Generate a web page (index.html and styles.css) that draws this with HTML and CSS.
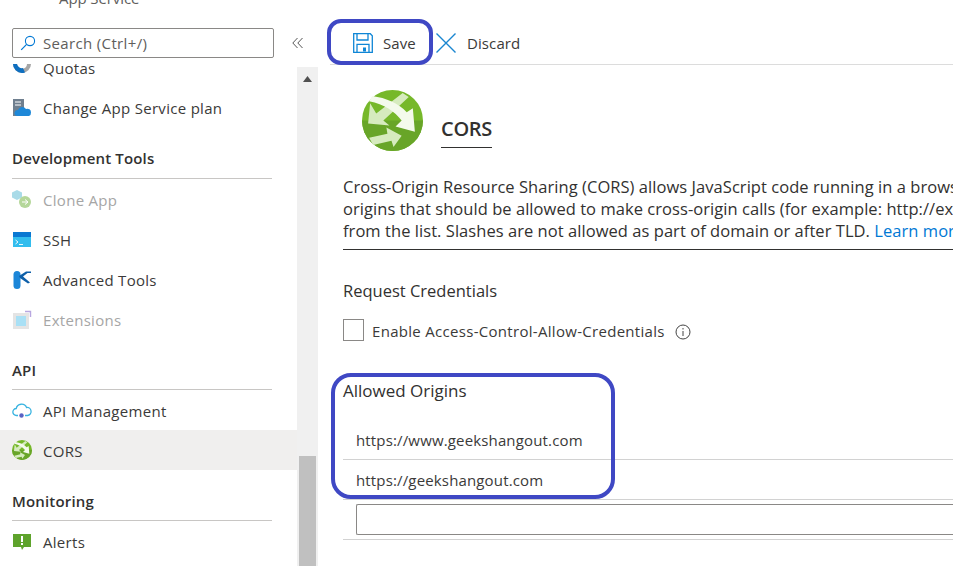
FILE: index.html
```html
<!DOCTYPE html>
<html lang="en">
<head>
<meta charset="utf-8">
<title>CORS</title>
<link rel="stylesheet" href="styles.css">
</head>
<body>
<div class="page">
  <aside class="sidebar">
    <div class="app-title">App Service</div>
    <div class="search-row">
      <div class="search">
        <svg class="search-icon" width="16" height="16" viewBox="0 0 16 16"><circle cx="10" cy="6" r="4.6" fill="none" stroke="#0078d4" stroke-width="1.1"/><path d="M6.600 9.400 1.200 14.800" stroke="#0078d4" stroke-width="1.200" fill="none"/></svg>
        <span>Search (Ctrl+/)</span>
      </div>
      <svg class="collapse" width="12" height="12" viewBox="0 0 12 12"><path d="M5.500 1 .8 6l4.700 5M10.500 1 5.800 6l4.700 5" fill="none" stroke="#555" stroke-width="1"/></svg>
    </div>
    <div class="nav-wrap">
      <nav class="nav">
        <div class="item quotas">
          <svg class="icon" width="20" height="20" viewBox="0 0 20 20"><path d="M1 6a9 9 0 0 0 18 0h-4a5 5 0 0 1-10 0z" fill="#a6a6a6"/><path d="M1 6a9 9 0 0 0 9 9c2 0 3-.5 3-.5L11 10a5 5 0 0 1-6-4z" fill="#0e6fc0"/></svg>
          <span>Quotas</span>
        </div>
        <div class="item">
          <svg class="icon" width="20" height="20" viewBox="0 0 20 20"><rect x="1" y="1" width="11" height="17" fill="#6f7f8f"/><path d="M3 4h6M3 7h6" stroke="#fff" stroke-width="1.200"/><path d="M5 18a3 3 0 0 1 1-6 4.500 4.500 0 0 1 8-1 3.600 3.600 0 0 1 5 3.500A3.500 3.500 0 0 1 17 18z" fill="#1e88d8"/></svg>
          <span>Change App Service plan</span>
        </div>
        <div class="group dev">Development Tools</div>
        <div class="item muted">
          <svg class="icon" width="20" height="20" viewBox="0 0 20 20"><path d="M5 0l5 2.500v5L5 10 0 7.500v-5z" fill="#a9dbe8"/><circle cx="13" cy="12" r="6" fill="#b5d79a"/><path d="M10 12h6M13 9.500l3 2.500-3 2.500" stroke="#fff" fill="none"/></svg>
          <span>Clone App</span>
        </div>
        <div class="item">
          <svg class="icon" width="20" height="20" viewBox="0 0 20 20"><rect x="1" y="2" width="18" height="15" fill="#32bdee"/><rect x="1" y="2" width="18" height="5" fill="#0a78d2"/><path d="M3.500 10l2.500 2-2.500 2M7 14.500h4" stroke="#fff" stroke-width=".9" fill="none"/></svg>
          <span>SSH</span>
        </div>
        <div class="item">
          <svg class="icon" width="20" height="20" viewBox="0 0 20 20"><rect x="1.500" y="1" width="7" height="18" rx="3.500" fill="#1c86d8"/><path d="M7 6 14 1.500h5L19 3h-3.500L11 6.500l7 6-2 1-8-5.500z" fill="#0e5fa8"/></svg>
          <span>Advanced Tools</span>
        </div>
        <div class="item muted">
          <svg class="icon" width="20" height="20" viewBox="0 0 20 20"><rect x="1" y="3" width="16" height="16" fill="#e4e4e4"/><rect x="4" y="6" width="10" height="10" fill="#a9e0f5"/><path d="M13 1.500h5.500V7" stroke="#b8a7e0" stroke-width="1.400" fill="none"/></svg>
          <span>Extensions</span>
        </div>
        <div class="group api">API</div>
        <div class="item">
          <svg class="icon" width="20" height="20" viewBox="0 0 20 20"><path d="M6 14.500H4.500a3.500 3.500 0 0 1-.3-7 5.500 5.500 0 0 1 10.400-1 4 4 0 0 1 .9 8H13" fill="none" stroke="#38b3e0" stroke-width="1.300"/><circle cx="9.500" cy="14.500" r="2.200" fill="#5a63c4"/></svg>
          <span>API Management</span>
        </div>
        <div class="item active">
          <svg class="icon" width="20" height="20" viewBox="0 0 60 60"><use href="#cors"/></svg>
          <span>CORS</span>
        </div>
        <div class="group mon">Monitoring</div>
        <div class="item">
          <svg class="icon" width="20" height="20" viewBox="0 0 20 20"><path d="M1 2h18v13h-7l-2 3-1-3H1z" fill="#5ea32c"/><rect x="9" y="4" width="2" height="6" fill="#fff"/><rect x="9" y="11" width="2" height="2" fill="#fff"/></svg>
          <span>Alerts</span>
        </div>
      </nav>
      <div class="scrollbar">
        <svg class="arrow" width="9" height="6" viewBox="0 0 9 6"><path d="M0 6 4.500 0 9 6z" fill="#505050"/></svg>
        <div class="thumb"></div>
      </div>
    </div>
  </aside>

  <main class="main">
    <div class="toolbar">
      <button class="tool save">
        <svg width="20" height="20" viewBox="0 0 20 20"><path d="M.7.700h16.600l2 2v16.600H.7z" fill="none" stroke="#0f86d6" stroke-width="1.300"/><path d="M4 .7v6.300h11V.7M4 19.300v-8h12v8" fill="none" stroke="#0f86d6" stroke-width="1.300"/><rect x="10" y="14.500" width="3" height="4" fill="#0f86d6"/></svg>
        <span>Save</span>
      </button>
      <button class="tool discard">
        <svg width="20" height="20" viewBox="0 0 20 20"><path d="M.5.500l19 19M19.500.5l-19 19" stroke="#1a86d0" stroke-width="1.400" fill="none"/></svg>
        <span>Discard</span>
      </button>
    </div>
    <div class="hero">
      <svg width="61" height="61" viewBox="0 0 60 60">
        <defs><g id="cors">
          <circle cx="30" cy="30" r="30" fill="#76b82a"/>
          <path d="M30 60a30 30 0 0 0 30-30H0a30 30 0 0 0 30 30z" fill="#68a528"/>
          <path d="M40 3 46 7 21 30l6 5-21-2 2-20 6 10z" fill="#d6ebbe"/>
          <path d="M10 6c14 2 26 7 34 16l6-4 2 23-19-5 6-6C32 21 22 14 7 11z" fill="#f4faec"/>
          <path d="M7 47l18-4-1-6 15 8-8 11-2-6-18 4z" fill="#d6ebbe"/>
        </g></defs>
        <use href="#cors"/>
      </svg>
      <h1 class="hero-title">CORS</h1>
    </div>
    <div class="clip">
      <p class="intro">Cross-Origin Resource Sharing (CORS) allows JavaScript code running in a browser<br>origins that should be allowed to make cross-origin calls (for example: http://example.com<br>from the list. Slashes are not allowed as part of domain or after TLD. <a href="#">Learn more</a></p>
    </div>
    <h2 class="section">Request Credentials</h2>
    <label class="check">
      <span class="box"></span>
      <span class="check-text">Enable Access-Control-Allow-Credentials</span>
      <svg class="info" width="16" height="16" viewBox="0 0 16 16"><circle cx="8" cy="8" r="7" fill="none" stroke="#444" stroke-width="1"/><path d="M8 7v5M8 4v1.500" stroke="#444" stroke-width="1"/></svg>
    </label>
    <h2 class="section origins">Allowed Origins</h2>
    <div class="origin origin-first">https://www.geekshangout.com</div>
    <div class="origin">https://geekshangout.com</div>
    <div class="origin-input"><div class="input"></div></div>
  </main>
  <div class="mark mark-save"></div>
  <div class="mark mark-origins"></div>
</div>
</body>
</html>
```
FILE: styles.css
```css
* { box-sizing: border-box; }
html, body { margin: 0; height: 100%; overflow: hidden; background: #fff; }
body { font-family: "Open Sans", "Noto Sans", sans-serif; color: #323130; }
.page { position: relative; display: flex; width: 953px; height: 566px; overflow: hidden; }

.sidebar { width: 318px; height: 566px; display: flex; flex-direction: column; flex: none; }
.app-title { height: 28px; margin-top: -10px; padding: 0 0 0 59px; font-size: 15px; line-height: 16px; color: #605e5c; letter-spacing: -.1px; white-space: nowrap; }
.search-row { display: flex; align-items: center; height: 30px; padding-left: 12px; flex: none; margin-top: 10px; }
.search { width: 262px; height: 30px; border: 1px solid #8a8886; border-radius: 2px; display: flex; align-items: center; gap: 7px; padding-left: 7px; font-size: 15px; color: #605e5c; letter-spacing: .35px; }
.search-icon { flex: none; }
.collapse { margin-left: 18px; }
.nav-wrap { flex: 1; min-height: 0; display: flex; overflow: hidden; }
.nav { width: 297px; flex: none; overflow: hidden; }
.item { display: flex; align-items: center; height: 40px; padding-left: 12px; gap: 11px; font-size: 15px; color: #3b3a39; letter-spacing: .3px; }
.quotas { margin-top: -10px; }
.icon { flex: none; }
.muted { color: #a6a6a6; }
.active { background: #f0efee; margin-top: -1px; }
.active span { padding-top: 2px; }
.group { margin: 0 25px 1px 12px; border-bottom: 1px solid #c8c6c4; font-size: 15px; line-height: 20px; font-weight: 600; color: #323130; letter-spacing: .17px; }
.dev { height: 51px; padding-top: 20px; }
.api { height: 50px; padding-top: 20px; }
.mon { height: 51px; padding-top: 21px; }
.scrollbar { width: 21px; margin-top: 9px; background: #f0f0f0; display: flex; flex-direction: column; align-items: center; padding-top: 9px; }
.arrow { flex: none; }
.thumb { width: 17px; flex: 1; margin-top: 374px; background: #c0c0c0; }

.main { flex: 1; min-width: 0; }
.toolbar { display: flex; align-items: center; height: 65px; margin-left: 12px; padding-top: 22px; border-bottom: 1px solid #dcdcdc; }
.tool { display: flex; align-items: center; border: 0; background: none; padding: 0; font: inherit; font-size: 15px; color: #3b3a39; letter-spacing: .1px; }
.save { width: 106px; padding-left: 23px; gap: 10px; }
.discard { gap: 11px; }
.hero { display: flex; align-items: center; gap: 18px; padding-left: 44px; height: 111px; }
.hero-title { margin: 13px 0 0; font-size: 20px; font-weight: 600; line-height: 27px; padding: 9px 0 5px; border-bottom: 1px solid #323130; color: #323130; letter-spacing: -.3px; }
.clip { margin-left: 25px; overflow: hidden; border-bottom: 1px solid #323130; height: 74px; }
.intro { margin: 0; font-size: 16.500px; line-height: 22px; color: #323130; letter-spacing: .05px; white-space: nowrap; }
.intro a { color: #0078d4; text-decoration: none; }
.section { margin: 0 0 0 25px; font-size: 16.500px; font-weight: 400; line-height: 22px; color: #323130; padding-top: 30px; height: 52px; }
.check { display: flex; align-items: center; gap: 8px; margin: 17px 0 0 25px; height: 22px; font-size: 15px; color: #3b3a39; letter-spacing: .3px; }
.box { width: 21px; height: 22px; border: 1px solid #8a8886; flex: none; }
.check-text { padding-top: 1px; white-space: nowrap; }
.info { margin: 3px 0 0 2px; }
.origins { font-size: 17px; padding-top: 39px; height: 61px; }
.origin { margin-left: 25px; padding: 10px 0 0 13px; height: 40px; border-bottom: 1px solid #d2d2d2; font-size: 15px; line-height: 20px; color: #3b3a39; letter-spacing: .15px; }
.origin-first { height: 58px; padding-top: 28px; }
.origin-input { margin-left: 25px; height: 40px; padding: 4px 0 0 13px; border-bottom: 1px solid #d2d2d2; }
.input { height: 31px; border: 1px solid #8a8886; border-right: 0; border-radius: 2px 0 0 2px; }

.mark { position: absolute; border: 4px solid #3f48c4; border-radius: 14px; pointer-events: none; }
.mark-save { left: 327px; top: 19px; width: 106px; height: 46px; }
.mark-origins { left: 331px; top: 373px; width: 284px; height: 126px; border-radius: 20px; }
```
